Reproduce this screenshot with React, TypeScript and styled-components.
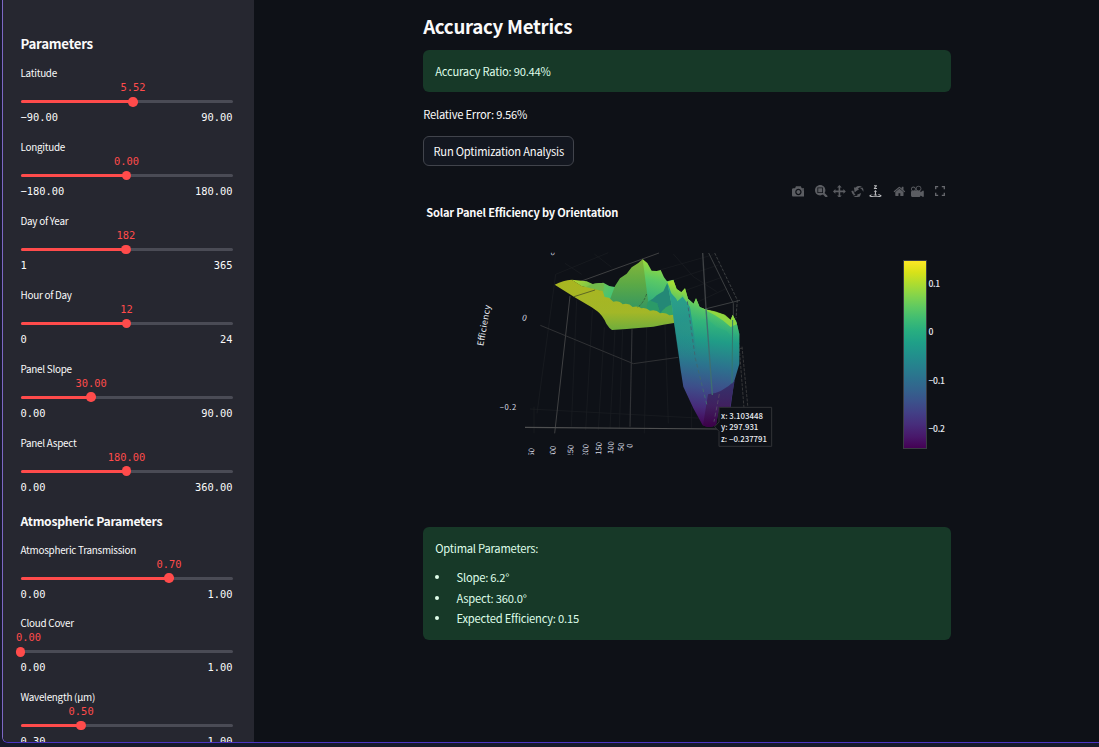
import React from "react";
import styled, { createGlobalStyle } from "styled-components";

const sans = `"Noto Sans CJK SC", "Open Sans", sans-serif`;
const mono = `"DejaVu Sans Mono", monospace`;

const Global = createGlobalStyle`
  * { box-sizing: border-box; }
  html, body { margin: 0; padding: 0; background: #171a2b; }
  body { overflow: hidden; font-family: ${sans}; color: #fafafa; }
`;

const Screen = styled.div`
  width: 1099px;
  height: 747px;
  padding: 0 0 4px 2px;
  background: #171a2b;
`;

const Frame = styled.div`
  display: flex;
  height: 743px;
  overflow: hidden;
  background: #0e1117;
  border-left: 1px solid #7d68c4;
  border-bottom: 1px solid #4b35c4;
  border-bottom-left-radius: 6px;
`;

const Sidebar = styled.aside`
  flex: none;
  width: 251px;
  height: 742px;
  overflow: hidden;
  padding: 34px 21.5px 0 17.5px;
  background: #262730;
`;

const SideHeading = styled.h3<{ $size: number; $gap: number; $top?: number }>`
  margin: ${(p) => p.$top ?? 0}px 0 ${(p) => p.$gap}px;
  height: 20px;
  font-size: ${(p) => p.$size}px;
  letter-spacing: -0.28px;
  line-height: 20px;
  font-weight: 600;
  white-space: nowrap;
`;

const Control = styled.div`
  height: 73.85px;
`;

const ControlLabel = styled.div`
  height: 14px;
  font-size: 9.9px;
  letter-spacing: -0.26px;
  line-height: 14px;
  white-space: nowrap;
`;

const ValueRow = styled.div`
  height: 14px;
  display: flex;
`;

const Value = styled.span`
  flex: none;
  transform: translateX(-50%);
  font: 10.4px/14px ${mono};
  color: #ff4b4b;
`;

const Track = styled.div`
  height: 3px;
  margin-top: 6px;
  border-radius: 2px;
  display: flex;
  align-items: center;
  background: #4a4b55;
`;

const Fill = styled.div`
  height: 3px;
  border-radius: 2px;
  background: #ff4b4b;
`;

const Thumb = styled.div`
  flex: none;
  width: 9.4px;
  height: 9.4px;
  margin-left: -4.7px;
  border-radius: 50%;
  background: #ff4b4b;
`;

const Range = styled.div`
  display: flex;
  justify-content: space-between;
  margin-top: 7px;
  font: 10.4px/14px ${mono};
`;

const Main = styled.main`
  flex: none;
  width: 528px;
  margin-left: 169.2px;
  padding-top: 11px;
  letter-spacing: -0.22px;
`;

const Title = styled.h2`
  margin: 0;
  height: 30px;
  font-size: 18.7px;
  letter-spacing: -0.3px;
  line-height: 30px;
  font-weight: 600;
`;

const Alert = styled.section<{ $height: number; $top: number }>`
  height: ${(p) => p.$height}px;
  margin-top: ${(p) => p.$top}px;
  padding: 11px 12px;
  border-radius: 6px;
  background: #173928;
  color: #dffde9;
  font-size: 11.2px;
  line-height: 20px;
`;

const Paragraph = styled.p`
  margin: 12px 0 0;
  font-size: 11.2px;
  line-height: 20px;
`;

const Button = styled.button`
  display: block;
  width: 151px;
  height: 30px;
  margin-top: 12px;
  padding: 0;
  border: 1px solid #41444c;
  border-radius: 6px;
  background: #131720;
  color: #fafafa;
  font: 11.2px/20px ${sans};
  letter-spacing: -0.22px;
  white-space: nowrap;
`;

const Chart = styled.section`
  height: 349px;
  padding-top: 12px;
`;

const Toolbar = styled.div`
  display: flex;
  justify-content: flex-end;
  align-items: center;
  height: 26px;
  padding-right: 6.2px;
`;

const ToolGroup = styled.div`
  display: flex;
  gap: 5.2px;
  margin-left: 11px;
`;

const ChartTitle = styled.div`
  padding-left: 3px;
  height: 20px;
  margin-top: -2.5px;
  font-size: 11.1px;
  letter-spacing: -0.2px;
  line-height: 20px;
  font-weight: 700;
`;

const ChartBody = styled.div`
  display: flex;
  height: 225px;
  margin-top: 8.5px;
  padding-left: 36.8px;
`;

const Scene = styled.svg`
  flex: none;
  width: 320px;
  height: 225px;
  margin-top: 10px;
  font-family: ${sans};
  letter-spacing: 0;
`;

const ColorBar = styled.div`
  width: 24px;
  height: 189px;
  margin: 30px 0 0 123px;
  border: 1px solid #3a3c42;
  background: linear-gradient(
    to top, #440154 0%, #48186a 6%, #472d7b 12.5%, #424086 19%, #3b528b 25%,
    #33638d 31.4%, #2c728e 37.6%, #26828e 44%, #21918c 50.2%, #1fa088 56.5%,
    #28ae80 62.7%, #3fbc73 69%, #5ec962 75.3%, #84d44b 81.6%, #addc30 87.8%,
    #d8e219 94%, #fde725 100%
  );
`;

const Ticks = styled.div`
  display: flex;
  flex-direction: column;
  margin: 46px 0 0 1.5px;
  font-size: 8.6px;
  letter-spacing: -0.3px;
  line-height: 14px;
  font-weight: 500;
  gap: 34.4px;
  color: #e6eaf1;
`;

const List = styled.ul`
  margin: 9px 0 0;
  padding: 0;
  list-style: none;
`;

const Item = styled.li`
  display: flex;
  align-items: center;
  height: 20.4px;
  &::before {
    content: "";
    width: 4px;
    height: 4px;
    margin: 0 17.8px 0 -0.5px;
    border-radius: 50%;
    background: #dffde9;
  }
`;

const ICONS: Record<string, [string, number]> = {
  camera: ["m500 450c-83 0-150-67-150-150 0-83 67-150 150-150 83 0 150 67 150 150 0 83-67 150-150 150z m400 150h-120c-16 0-34 13-39 29l-31 93c-6 15-23 28-40 28h-340c-16 0-34-13-39-28l-31-94c-6-15-23-28-40-28h-120c-55 0-100-45-100-100v-450c0-55 45-100 100-100h800c55 0 100 45 100 100v450c0 55-45 100-100 100z m-400-550c-138 0-250 112-250 250 0 138 112 250 250 250 138 0 250-112 250-250 0-138-112-250-250-250z m365 380c-19 0-35 16-35 35 0 19 16 35 35 35 19 0 35-16 35-35 0-19-16-35-35-35z", 1000],
  zoom: ["m1000-25l-250 251c40 63 63 138 63 218 0 224-182 406-407 406-224 0-406-182-406-406s183-406 407-406c80 0 155 22 218 62l250-250 125 125z m-812 250l0 438 437 0 0-438-437 0z m62 375l313 0 0-312-313 0 0 312z", 1000],
  pan: ["m1000 350l-187 188 0-125-250 0 0 250 125 0-188 187-187-187 125 0 0-250-250 0 0 125-188-188 186-187 0 125 252 0 0-250-125 0 187-188 188 188-125 0 0 250 250 0 0-126 187 188z", 1000],
  orbit: ["m922 660c-5 4-9 7-14 11-359 263-580-31-580-31l-102 28 58-400c0 1 1 1 2 2 118 108 351 249 351 249s-62 27-100 42c88 83 222 183 347 122 16-8 30-17 44-27-2 1-4 2-6 4z m36-329c0 0 64 229-88 296-62 27-124 14-175-11 157-78 225-208 249-266 8-19 11-31 11-31 2 5 6 15 11 32-5-13-8-20-8-20z m-775-239c70-31 117-50 198-32-121 80-199 346-199 346l-96-15-58-12c0 0 55-226 155-287z m603 133l-317-139c0 0 4-4 19-14 7-5 24-15 24-15s-177-147-389 4c235-287 536-112 536-112l31-22 100 299-4-1z", 1000],
  turntable: ["m833 5l-17 108v41l-130-65 130-66c0 0 0 38 0 39 0-1 36-14 39-25 4-15-6-22-16-30-15-12-39-16-56-20-90-22-187-23-279-23-261 0-341 34-353 59 3 60 228 110 228 110-140-8-351-35-351-116 0-120 293-142 474-142 155 0 477 22 477 142 0 50-74 79-163 96z m-374 94c-58-5-99-21-99-40 0-24 65-43 144-43 79 0 143 19 143 43 0 19-42 34-98 40v216h87l-132 135-133-135h88v-216z m167 515h-136v1c16 16 31 34 46 52l84 109v54h-230v-71h124v-1c-16-17-28-32-44-51l-89-114v-51h245v72z", 1000],
  home: ["m786 296v-267q0-15-11-26t-25-10h-214v214h-143v-214h-214q-15 0-25 10t-11 26v267q0 1 0 2t0 2l321 264 321-264q1-1 1-4z m124 39l-34-41q-5-5-12-6h-2q-7 0-12 3l-386 322-386-322q-7-4-13-4-7 2-12 7l-35 41q-4 5-3 13t6 12l401 334q18 15 42 15t43-15l136-114v109q0 8 5 13t13 5h107q8 0 13-5t5-13v-227l122-102q5-5 6-12t-4-13z", 928.6],
  movie: ["m938 413l-188-125c0 37-17 71-44 94 64 38 107 107 107 187 0 121-98 219-219 219-121 0-219-98-219-219 0-61 25-117 66-156h-115c30 33 49 76 49 125 0 103-84 187-187 187s-188-84-188-187c0-57 26-107 65-141-38-22-65-62-65-109v-250c0-70 56-126 125-126h500c69 0 125 56 125 126l188-126c34 0 62 28 62 63v375c0 35-28 63-62 63z m-750 0c-69 0-125 56-125 125s56 125 125 125 125-56 125-125-56-125-125-125z m406-1c-87 0-157 70-157 157 0 86 70 156 157 156s156-70 156-156-70-157-156-157z", 1000],
};

const ToolIcon = ({ name, active }: { name: string; active?: boolean }) => (
  <svg width={12.8} height={12.8} viewBox={`0 0 ${ICONS[name][1]} 1000`}>
    <path d={ICONS[name][0]} transform="matrix(1 0 0 -1 0 850)" fill={active ? "#b9babd" : "#5b5d62"} />
  </svg>
);

type SliderProps = { label: string; value: string; min: string; max: string; at: number };

const Slider = ({ label, value, min, max, at }: SliderProps) => (
  <Control>
    <ControlLabel>{label}</ControlLabel>
    <ValueRow><Value style={{ marginLeft: `max(8px, ${at}%)` }}>{value}</Value></ValueRow>
    <Track><Fill style={{ width: `${at}%` }} /><Thumb /></Track>
    <Range><span>{min}</span><span>{max}</span></Range>
  </Control>
);

const position: SliderProps[] = [
  { label: "Latitude", value: "5.52", min: "−90.00", max: "90.00", at: 53.1 },
  { label: "Longitude", value: "0.00", min: "−180.00", max: "180.00", at: 50 },
  { label: "Day of Year", value: "182", min: "1", max: "365", at: 49.7 },
  { label: "Hour of Day", value: "12", min: "0", max: "24", at: 50 },
  { label: "Panel Slope", value: "30.00", min: "0.00", max: "90.00", at: 33.3 },
  { label: "Panel Aspect", value: "180.00", min: "0.00", max: "360.00", at: 50 },
];

const atmosphere: SliderProps[] = [
  { label: "Atmospheric Transmission", value: "0.70", min: "0.00", max: "1.00", at: 70 },
  { label: "Cloud Cover", value: "0.00", min: "0.00", max: "1.00", at: 0 },
  { label: "Wavelength (µm)", value: "0.50", min: "0.30", max: "1.00", at: 28.6 },
];

const yTicks: [number, number, string][] = [
  [221, 650, "50"], [285, 656, "300"], [338, 653, "250"], [383, 651, "200"],
  [423, 645, "150"], [459, 643, "100"], [490, 634, "50"], [517, 624, "0"],
];

const SurfacePlot = () => (
  <Scene viewBox="0 0 960 675">
    <defs>
      <linearGradient id="flat" x1="0" y1="0" x2="0" y2="1">
        <stop offset="0" stopColor="#a9b520" />
        <stop offset="0.65" stopColor="#a3b727" />
        <stop offset="1" stopColor="#6fae3d" />
      </linearGradient>
      <linearGradient id="rim" x1="0" y1="0" x2="1" y2="0.5">
        <stop offset="0" stopColor="#b9dd2b" />
        <stop offset="0.45" stopColor="#79c34b" />
        <stop offset="1" stopColor="#46c474" />
      </linearGradient>
      <linearGradient id="hill" x1="0" y1="0" x2="0" y2="1">
        <stop offset="0" stopColor="#86b638" />
        <stop offset="0.45" stopColor="#5ba946" />
        <stop offset="1" stopColor="#2d9267" />
      </linearGradient>
      <linearGradient id="ridge" gradientUnits="userSpaceOnUse" x1="600" y1="70" x2="570" y2="200">
        <stop offset="0" stopColor="#9bdb3b" />
        <stop offset="0.4" stopColor="#5ac965" />
        <stop offset="1" stopColor="#28a884" />
      </linearGradient>
      <linearGradient id="wall" gradientUnits="userSpaceOnUse" x1="755" y1="190" x2="710" y2="560">
        <stop offset="0" stopColor="#5fcd60" />
        <stop offset="0.14" stopColor="#35b779" />
        <stop offset="0.3" stopColor="#209c87" />
        <stop offset="0.5" stopColor="#2c738e" />
        <stop offset="0.68" stopColor="#3d4f8a" />
        <stop offset="0.84" stopColor="#472b7a" />
        <stop offset="1" stopColor="#440154" />
      </linearGradient>
      <linearGradient id="crest" gradientUnits="userSpaceOnUse" x1="720" y1="160" x2="685" y2="255">
        <stop offset="0" stopColor="#a4dd35" />
        <stop offset="0.45" stopColor="#54c568" />
        <stop offset="1" stopColor="#27a884" stopOpacity="0" />
      </linearGradient>
      <linearGradient id="face" gradientUnits="userSpaceOnUse" x1="640" y1="130" x2="665" y2="350">
        <stop offset="0" stopColor="#2aa58a" />
        <stop offset="0.5" stopColor="#25928c" stopOpacity="0.9" />
        <stop offset="1" stopColor="#2c738e" stopOpacity="0" />
      </linearGradient>
      <linearGradient id="under" x1="0" y1="0" x2="0" y2="1">
        <stop offset="0" stopColor="#33346d" />
        <stop offset="0.55" stopColor="#40205f" />
        <stop offset="1" stopColor="#3c0048" />
      </linearGradient>
      <clipPath id="topclip"><rect x="250" y="38" width="40" height="20" /></clipPath>
      <clipPath id="bottomclip"><rect x="180" y="590" width="360" height="54" /></clipPath>
    </defs>

    <g fill="none" stroke="#1b1e23" strokeWidth="2">
      <path d="M287 103 L445 38 M287 103 L231 520 M315 70 L365 103 M403 42 L455 82 M350 180 L334 560 M397 210 L377 570 M433 262 L415 570 M465 270 L450 565 M488 270 L478 565 M560 262 L553 580 M615 255 L625 550 M210 507 L730 535 M222 500 L222 580 M695 500 L695 565 M640 42 L700 110 L770 155 M600 90 L760 44 M640 120 L775 75 M680 150 L785 112 M715 185 L800 145" />
    </g>
    <g fill="none" stroke="#3f4042" strokeWidth="3">
      <path d="M330 168 L284 580 M362 124 L597 39" />
      <path d="M195 562 L775 567" stroke="#4f5051" strokeWidth="3.5" />
      <path d="M241 256 L520 371 L655 352" stroke="#36373a" strokeWidth="2.5" />
      <path d="M516 268 L510 560" stroke="#303236" strokeWidth="3.5" />
      <path d="M728 39 L738 206" stroke="#3f4245" strokeWidth="4" />
      <path d="M746 39 L820 190 L820 230 M735 207 L840 181" stroke="#3c3f41" />
      <path d="M764 39 L832 180 L828 235" stroke="#3c3f41" strokeDasharray="9 4" />
      <path d="M846 320 L864 505 M836 300 L852 505 M838 325 L850 325" stroke="#363739" strokeDasharray="9 4" />
    </g>

    <path d="M335 119 L380 124 L398 132 L430 128 L448 138 L468 142 L455 184 L432 176 L426 153 L365 139z" fill="url(#rim)" />
    <path d="M392 134 Q410 127 432 130 L430 155 L412 150 L375 143z" fill="#72b94a" />
    <path d="M450 178 L465 138 L480 115 L500 101 L515 82 L535 69 L548 58 L556 66 L566 140 L568 225 L520 204 L450 184z" fill="url(#hill)" />
    <path d="M548 58 L562 69 L575 92 L590 93 L602 90 L612 112 L621 124 L640 119 L645 230 L610 224 L584 180 L566 194 L560 150z" fill="url(#ridge)" />
    <path d="M562 188 Q580 168 590 184 L606 224 L560 214z" fill="#2b9a68" />
    <path d="M572 182 L590 166 L610 154 L622 128 L640 170 L645 226 L602 222 L592 190z" fill="#248876" />
    <path d="M598 222 Q620 195 635 194 L644 228z" fill="#35a365" />
    <path d="M284 134 Q310 121 335 119 L365 138 L415 150 L428 153 L434 171 L447 173 L460 185 Q478 181 488 193 Q506 188 518 201 Q535 197 544 205 Q558 202 570 212 Q588 207 600 220 Q615 216 628 226 L642 224 L642 249 L610 254 L580 260 L500 267 L456 270 Q447 264 439 251 Q427 225 412 214 L395 202 L344 172z" fill="url(#flat)" />

    <path d="M622 126 L640 120 L650 147 L664 157 L675 145 L684 176 L701 191 L708 175 L719 201 L735 208 L765 216 L791 224 L812 241 L818 225 L829 245 L838 282 L838 372 L822 426 L812 502 L778 502 L768 554 Q750 567 728 556 L700 505 L670 440 L662 390 L650 300 L637 206z" fill="url(#wall)" />
    <path d="M622 128 L640 150 L652 184 L668 170 L690 200 L712 350 L655 350 L637 206z" fill="url(#face)" />
    <path d="M622 126 L640 120 L650 147 L664 157 L675 145 L684 176 L701 191 L708 175 L719 201 L735 208 L765 216 L791 224 L812 241 L818 225 L829 245 L838 282 L838 320 L800 272 L770 262 L740 235 L708 245 L690 200 L668 165 L652 180 L634 160z" fill="url(#crest)" />
    <path d="M720 202 L735 208 L765 214 L795 224 L812 239 L818 224 L831 252 L812 261 L790 242 L765 226z" fill="#9edb38" fillOpacity="0.8" />
    <path d="M744 463 Q785 460 824 422 L810 502 L778 502 L768 554 Q750 567 729 556z" fill="url(#under)" />
    <g fill="none" strokeWidth="3">
      <path d="M342 170 L405 150" stroke="#5d6824" />
      <path d="M560 162 Q550 190 533 202" stroke="#35683f" strokeDasharray="8 4" />
      <path d="M738 206 L757 465" stroke="#3f6f70" strokeWidth="4" />
      <path d="M682 184 L706 355 L742 500" strokeDasharray="11 8" stroke="#3f6872" />
      <path d="M818 240 L816 430" stroke="#33786d" />
      <path d="M778 462 L762 545" stroke="#514365" strokeDasharray="12 7" />
    </g>

    <text transform="translate(70 319) rotate(-80)" fontSize="26" fill="#e6eaf1" textLength="124">Efficiency</text>
    <text x="186" y="242" fontSize="25" fill="#d8dce2" transform="rotate(15 193 234)">0</text>
    <text x="119" y="511" fontSize="23" fill="#d8dce2" textLength="50">−0.2</text>
    <g clipPath="url(#topclip)">
      <text x="258" y="44" fontSize="23" fill="#d8dce2" transform="rotate(12 270 44)">−0</text>
    </g>
    <g clipPath="url(#bottomclip)" fontSize="23" fill="#d8dce2">
      {yTicks.map(([x, y, t]) => (
        <text key={x} transform={`translate(${x} ${y}) rotate(-86)`}>{t}</text>
      ))}
    </g>

    <path d="M764 560 L777 546 V502 H935 V619 H777 V574z" fill="#0e1117" stroke="#313337" strokeWidth="3" />
    <g fontSize="23.5" fontWeight="500" fill="#e8ebef">
      <text x="783" y="536" textLength="126">x: 3.103448</text>
      <text x="783" y="570" textLength="112">y: 297.931</text>
      <text x="783" y="605" textLength="138">z: −0.237791</text>
    </g>
  </Scene>
);

export default function App() {
  return (
    <Screen>
      <Global />
      <Frame>
        <Sidebar>
          <SideHeading $size={13.3} $gap={12.3}>Parameters</SideHeading>
          {position.map((s) => <Slider key={s.label} {...s} />)}
          <SideHeading $size={12.2} $gap={11.2} $top={2}>Atmospheric Parameters</SideHeading>
          {atmosphere.map((s) => <Slider key={s.label} {...s} />)}
        </Sidebar>
        <Main>
          <Title>Accuracy Metrics</Title>
          <Alert $height={42} $top={9}>Accuracy Ratio: 90.44%</Alert>
          <Paragraph>Relative Error: 9.56%</Paragraph>
          <Button>Run Optimization Analysis</Button>
          <Chart>
            <Toolbar>
              <ToolGroup><ToolIcon name="camera" /></ToolGroup>
              <ToolGroup>
                <ToolIcon name="zoom" />
                <ToolIcon name="pan" />
                <ToolIcon name="orbit" />
                <ToolIcon name="turntable" active />
              </ToolGroup>
              <ToolGroup>
                <ToolIcon name="home" />
                <ToolIcon name="movie" />
              </ToolGroup>
              <ToolGroup>
                <svg width="10" height="10" viewBox="0 0 10 10" fill="none" stroke="#686a6f" strokeWidth="1.3">
                  <path d="M0.7 3.2V0.7H3.2M6.8 0.7H9.3V3.2M9.3 6.8V9.3H6.8M3.2 9.3H0.7V6.8" />
                </svg>
              </ToolGroup>
            </Toolbar>
            <ChartTitle>Solar Panel Efficiency by Orientation</ChartTitle>
            <ChartBody>
              <SurfacePlot />
              <ColorBar />
              <Ticks><span>0.1</span><span>0</span><span>−0.1</span><span>−0.2</span></Ticks>
            </ChartBody>
          </Chart>
          <Alert $height={113} $top={12}>
            Optimal Parameters:
            <List>
              <Item>Slope: 6.2°</Item>
              <Item>Aspect: 360.0°</Item>
              <Item>Expected Efficiency: 0.15</Item>
            </List>
          </Alert>
        </Main>
      </Frame>
    </Screen>
  );
}
